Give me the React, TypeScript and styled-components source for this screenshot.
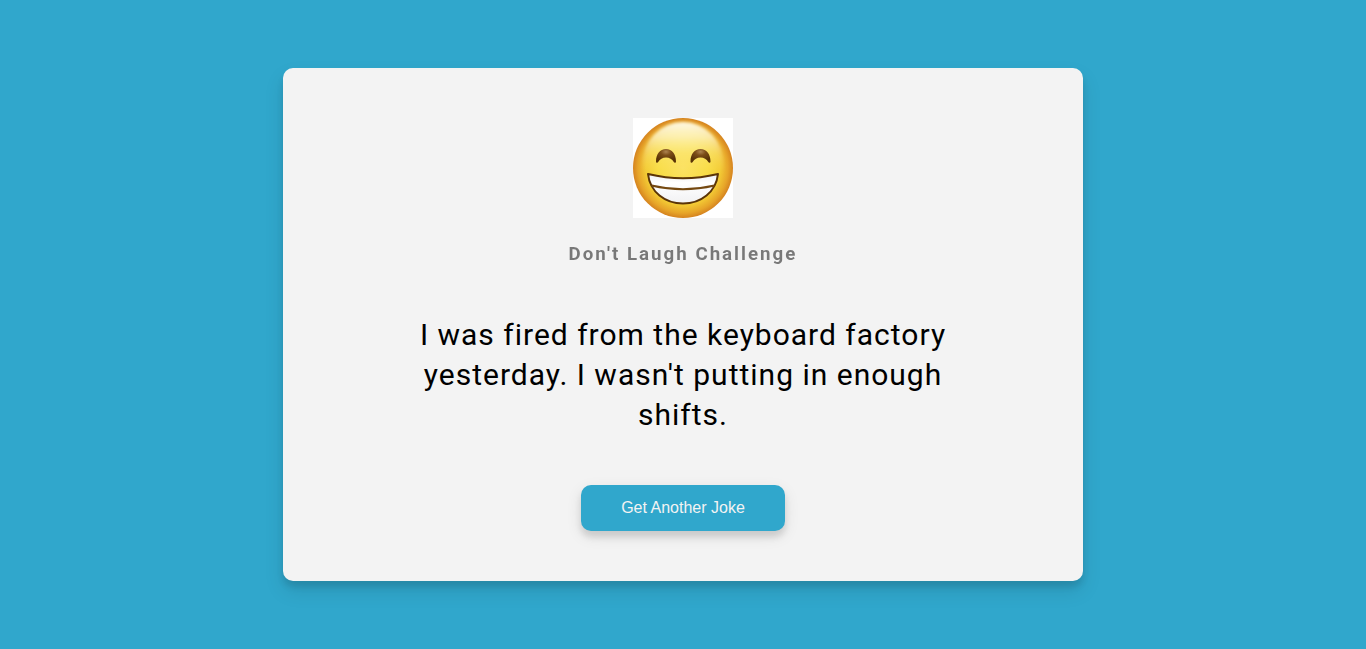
import React, { useState } from 'react';
import styled, { createGlobalStyle } from 'styled-components';

const GlobalStyle = createGlobalStyle`
  * {
    box-sizing: border-box;
  }

  body {
    margin: 0;
    min-height: 100vh;
    background-color: #30a7cc;
    font-family: Roboto, sans-serif;
  }
`;

const Page = styled.main`
  display: flex;
  flex-direction: column;
  align-items: center;
  justify-content: center;
  min-height: 100vh;
  padding: 20px;
`;

const Card = styled.section`
  width: 100%;
  max-width: 800px;
  padding: 50px 20px;
  border-radius: 10px;
  background-color: #f3f3f3;
  box-shadow: 0 10px 20px rgba(0, 0, 0, 0.1), 0 6px 6px rgba(0, 0, 0, 0.1);
  text-align: center;
`;

const Emoji = styled.svg`
  display: block;
  width: 100px;
  height: 100px;
  margin: 0 auto 25px;
  background-color: #fff;
`;

const Title = styled.h3`
  margin: 0;
  line-height: 22px;
  letter-spacing: 2px;
  opacity: 0.5;
`;

const Joke = styled.p`
  max-width: 600px;
  margin: 50px auto;
  font-size: 30px;
  line-height: 40px;
  letter-spacing: 1px;
`;

const JokeButton = styled.button`
  padding: 14px 40px;
  border: 0;
  border-radius: 10px;
  background-color: #30a7cc;
  color: #f3f3f3;
  font-family: 'Liberation Sans', Arial, sans-serif;
  font-size: 16px;
  line-height: 18px;
  box-shadow: 0 5px 15px rgba(0, 0, 0, 0.1), 0 6px 6px rgba(0, 0, 0, 0.1);
  cursor: pointer;

  &:active {
    transform: scale(0.98);
  }
`;

const jokes = [
  "I was fired from the keyboard factory yesterday. I wasn't putting in enough shifts.",
  "Why don't eggs tell jokes? They'd crack each other up.",
  "I only know 25 letters of the alphabet. I don't know y.",
];

const GrinningFace = () => (
  <Emoji viewBox="0 0 100 100" role="img" aria-label="Grinning face">
    <defs>
      <radialGradient id="face" cx="50" cy="50" r="50" gradientUnits="userSpaceOnUse">
        <stop offset="0" stopColor="#fbe162" />
        <stop offset="0.5" stopColor="#f8dc45" />
        <stop offset="0.74" stopColor="#f3cb35" />
        <stop offset="0.9" stopColor="#e7a529" />
        <stop offset="1" stopColor="#d5831f" />
      </radialGradient>
      <linearGradient id="shine" x1="0" y1="0" x2="0" y2="1">
        <stop offset="0" stopColor="#fffdf0" stopOpacity="0.95" />
        <stop offset="0.18" stopColor="#fff8d0" stopOpacity="0.75" />
        <stop offset="0.38" stopColor="#fff09c" stopOpacity="0.3" />
        <stop offset="0.6" stopColor="#ffe766" stopOpacity="0" />
      </linearGradient>
      <filter id="soften">
        <feGaussianBlur stdDeviation="1.5" />
      </filter>
      <radialGradient id="eye" cx="0.5" cy="0.2" r="0.65">
        <stop offset="0" stopColor="#ad8350" />
        <stop offset="0.4" stopColor="#7c4d18" />
        <stop offset="1" stopColor="#593306" />
      </radialGradient>
      <linearGradient id="teeth" x1="0" y1="0" x2="0" y2="1">
        <stop offset="0" stopColor="#ededf0" />
        <stop offset="0.3" stopColor="#ffffff" />
        <stop offset="1" stopColor="#f1f1f3" />
      </linearGradient>
    </defs>
    <circle cx="50" cy="50" r="50" fill="url(#face)" />
    <ellipse cx="50" cy="47" rx="41" ry="43" fill="url(#shine)" filter="url(#soften)" />
    <path
      d="M23 43.5C23 36 27 31 33 31s10 5 10 12.500c0 1.500-1.600 1.700-2.200.500C39 41 36.500 39.500 33 39.500S27 41 25.200 44c-.6 1.200-2.200 1-2.200-.5Z"
      fill="url(#eye)"
    />
    <path
      d="M57.500 43.500C57.500 36 61.500 31 67.500 31s10 5 10 12.500c0 1.500-1.600 1.700-2.200.500C73.500 41 71 39.500 67.500 39.500S61.500 41 59.700 44c-.6 1.200-2.200 1-2.200-.5Z"
      fill="url(#eye)"
    />
    <path
      d="M15 56Q50 64.500 85 56C83 74 68 85.500 50 85.500S17 74 15 56Z"
      fill="url(#teeth)"
      stroke="#5b3407"
      strokeWidth="2"
      strokeLinejoin="round"
    />
    <path d="M18.500 67.500Q50 75 81.500 67.500" fill="none" stroke="#744810" strokeWidth="2" />
  </Emoji>
);

export default function App() {
  const [index, setIndex] = useState(0);

  return (
    <>
      <GlobalStyle />
      <Page>
        <Card>
          <GrinningFace />
          <Title>Don't Laugh Challenge</Title>
          <Joke>{jokes[index]}</Joke>
          <JokeButton type="button" onClick={() => setIndex((index + 1) % jokes.length)}>
            Get Another Joke
          </JokeButton>
        </Card>
      </Page>
    </>
  );
}
